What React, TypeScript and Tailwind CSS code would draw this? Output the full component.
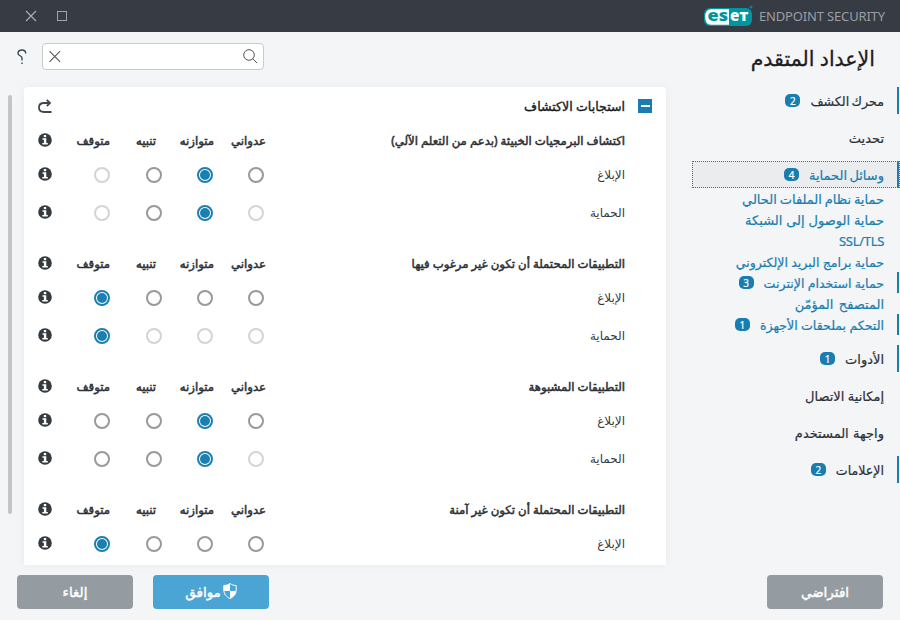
import clsx from 'clsx'

type Level = 'aggressive' | 'balanced' | 'cautious' | 'off'
type Row = { label: string; value: Level; disabled: Level[] }
type Group = { title: string; rows: Row[] }
type NavItem = { label: string; className?: string; badge?: number; active?: boolean; children?: NavItem[] }

const LEVELS: { key: Level; label: string; width: string; offset: string }[] = [
  { key: 'aggressive', label: 'عدواني', width: 'w-[51px]', offset: '-ms-0.5' },
  { key: 'balanced', label: 'متوازنه', width: 'w-[51px]', offset: '-ms-px' },
  { key: 'cautious', label: 'تنبيه', width: 'w-[52px]', offset: 'ms-1.5' },
  { key: 'off', label: 'متوقف', width: 'w-[50px]', offset: '' },
]

const GROUPS: Group[] = [
  {
    title: 'اكتشاف البرمجيات الخبيثة (بدعم من التعلم الآلي)',
    rows: [
      { label: 'الإبلاغ', value: 'balanced', disabled: ['off'] },
      { label: 'الحماية', value: 'balanced', disabled: ['aggressive', 'off'] },
    ],
  },
  {
    title: 'التطبيقات المحتملة أن تكون غير مرغوب فيها',
    rows: [
      { label: 'الإبلاغ', value: 'off', disabled: [] },
      { label: 'الحماية', value: 'off', disabled: ['aggressive', 'balanced', 'cautious'] },
    ],
  },
  {
    title: 'التطبيقات المشبوهة',
    rows: [
      { label: 'الإبلاغ', value: 'balanced', disabled: [] },
      { label: 'الحماية', value: 'balanced', disabled: ['aggressive'] },
    ],
  },
  {
    title: 'التطبيقات المحتملة أن تكون غير آمنة',
    rows: [{ label: 'الإبلاغ', value: 'off', disabled: [] }],
  },
]

const NAV: NavItem[] = [
  { label: 'محرك الكشف', className: 'mt-0.5 text-[12.7px] [word-spacing:-1px]', badge: 2 },
  { label: 'تحديث' },
  {
    label: 'وسائل الحماية',
    className: 'mt-0.5 [word-spacing:-1px]',
    badge: 4,
    active: true,
    children: [
      { label: 'حماية نظام الملفات الحالي', className: 'mt-0.5 [word-spacing:-0.5px]' },
      { label: 'حماية الوصول إلى الشبكة', className: 'mt-0.5 [word-spacing:0.5px]' },
      { label: 'SSL/TLS', className: 'mt-0.5 tracking-[-0.3px]' },
      { label: 'حماية برامج البريد الإلكتروني', className: 'mt-1 text-[12.6px]' },
      { label: 'حماية استخدام الإنترنت', className: 'mt-1 text-[12.6px]', badge: 3 },
      { label: 'المتصفح المؤمّن', className: 'mt-0.5 [word-spacing:2px]' },
      { label: 'التحكم بملحقات الأجهزة', className: 'mt-1 text-[12.6px]', badge: 1 },
    ],
  },
  { label: 'الأدوات', badge: 1 },
  { label: 'إمكانية الاتصال' },
  { label: 'واجهة المستخدم', className: 'mt-0.5 [word-spacing:1px]' },
  { label: 'الإعلامات', className: 'mt-1 text-[12.6px]', badge: 2 },
]

function InfoIcon({ className }: { className?: string }) {
  return (
    <svg className={className} width="14" height="14" viewBox="0 0 14 14">
      <circle cx="7" cy="7" r="6.8" fill="#343a40" />
      <rect x="5.8" y="2" width="2.4" height="2.2" fill="#fff" />
      <path d="M4.500 5.300h3.800v4.700h1.500v1.500H4.300V10h1.600V6.700H4.500z" fill="#fff" />
    </svg>
  )
}

function Radio({ checked, disabled }: { checked: boolean; disabled: boolean }) {
  return (
    <span
      className={clsx(
        'flex size-4 items-center justify-center rounded-full border-2 bg-white',
        checked ? 'border-[#1b7fb1]' : disabled ? 'border-[#d4d4d4]' : 'border-[#999]',
      )}
    >
      {checked && <span className="size-2.5 shrink-0 rounded-full bg-[#1b7fb1]" />}
    </span>
  )
}

function Badge({ count }: { count: number }) {
  return (
    <span className="ms-2.5 flex h-[13px] w-[15px] items-center justify-center rounded-[5px] bg-[#197db0] font-['Noto_Sans'] text-[10px] leading-none text-white">
      {count}
    </span>
  )
}

function NavEntry({ item, sub }: { item: NavItem; sub?: boolean }) {
  return (
    <div
      className={clsx(
        'flex items-center border-s-2 ps-[13px] text-[13px] whitespace-nowrap [-webkit-text-stroke:0.2px]',
        sub ? 'ms-px h-[21px] text-[#197db0]' : 'h-[27px]',
        item.active ? '-my-px text-[#197db0]' : !sub && 'ms-px text-[#2c3036]',
        item.badge ? 'border-[#197db0]' : 'border-transparent',
      )}
    >
      <span className={item.className ?? 'mt-0.5'}>{item.label}</span>
      {item.badge && <Badge count={item.badge} />}
    </div>
  )
}

function GroupBlock({ group }: { group: Group }) {
  return (
    <section className="h-[123px]">
      <div className="flex h-[33px] items-center pt-px text-[11.7px] whitespace-nowrap text-[#2c3036] [-webkit-text-stroke:0.5px]">
        <h3 className="mt-0.5 w-[361px]">{group.title}</h3>
        {LEVELS.map((level) => (
          <span key={level.key} className={clsx('mt-0.5', level.width)}>
            <span className={clsx('inline-block', level.offset)}>{level.label}</span>
          </span>
        ))}
        <InfoIcon className="ms-auto" />
      </div>
      {group.rows.map((row) => (
        <div key={row.label} className="flex h-[38px] items-center text-xs text-[#343a40]">
          <span className="w-[361px]">{row.label}</span>
          {LEVELS.map((level) => (
            <span key={level.key} className={level.width}>
              <Radio checked={row.value === level.key} disabled={row.disabled.includes(level.key)} />
            </span>
          ))}
          <InfoIcon className="ms-auto mb-0.5" />
        </div>
      ))}
    </section>
  )
}

function EsetLogo() {
  return (
    <svg width="49" height="22" viewBox="0 0 49 22">
      <rect x="0" y="3" width="48" height="18" rx="6" fill="#0096a1" />
      <path d="M7 4.200h18v15.600H7q-5.800 0-5.800-7.800T7 4.200z" fill="#fff" />
      <circle cx="47" cy="2" r="1.500" fill="#0f7f88" />
      <text x="3.500" y="16.300" textLength="20.500" lengthAdjust="spacingAndGlyphs" fontFamily="Open Sans" fontWeight="800" fontSize="15" fill="#0096a1">es</text>
      <text x="26" y="16.300" textLength="18.500" lengthAdjust="spacingAndGlyphs" fontFamily="Open Sans" fontWeight="800" fontSize="15" fill="#fff">eт</text>
    </svg>
  )
}

export default function App() {
  return (
    <div dir="rtl" className="flex h-[620px] w-[900px] flex-col overflow-hidden bg-[#f3f5f7] font-['Noto_Sans','DejaVu_Sans',sans-serif]">
      <header className="flex h-8 items-center justify-between bg-[#373b43] ps-[15px] pe-[25px]">
        <div dir="ltr" className="flex items-center gap-1.5">
          <EsetLogo />
          <span className="mt-0.5 font-['Noto_Sans'] text-[13px] tracking-[-0.15px] text-[#9a9ea4]">ENDPOINT SECURITY</span>
        </div>
        <div className="flex items-center gap-5">
          <span className="size-2.5 border border-[#a5a5a5]" />
          <svg width="12" height="12" viewBox="0 0 12 12" stroke="#b0b0b0" strokeWidth="1.1">
            <path d="M1 1l10 10M11 1L1 11" />
          </svg>
        </div>
      </header>

      <div className="flex h-[533px]">
        <aside className="w-[208px] shrink-0">
          <h1 className="flex h-[55px] items-center ps-[25px] pb-0.5 text-[20.5px] whitespace-nowrap text-[#1c1c1e] [-webkit-text-stroke:0.3px]">
            الإعداد المتقدم
          </h1>
          <nav className="flex flex-col gap-2.5">
            {NAV.map((item) => (
              <div key={item.label}>
                {item.active ? (
                  <div className="border border-dotted border-[#197db0] bg-[#ebecee]">
                    <NavEntry item={item} />
                  </div>
                ) : (
                  <NavEntry item={item} />
                )}
                {item.children?.map((child) => (
                  <NavEntry key={child.label} item={child} sub />
                ))}
              </div>
            ))}
          </nav>
        </aside>

        <main className="flex min-w-0 flex-1 flex-col">
          <div className="flex h-[55px] shrink-0 items-center justify-end gap-[15px] pe-[17px] pb-1.5">
            <div className="flex h-[27px] w-[222px] items-center justify-between rounded border border-[#cacaca] bg-white px-[5px]">
              <svg width="16" height="16" viewBox="0 0 16 16" fill="none" stroke="#555" strokeWidth="1">
                <circle cx="7" cy="6" r="5.300" />
                <path d="M10.800 9.800L15 14" />
              </svg>
              <svg width="14" height="12" viewBox="0 0 14 12" stroke="#555" strokeWidth="1.1">
                <path d="M1.500.2l10.600 10.600M12.100.2L1.500 10.800" />
              </svg>
            </div>
            <svg width="10" height="16" viewBox="0 0 10 16" fill="none" stroke="#3d4852" strokeWidth="1.4">
              <path d="M8.700 4.500C8.700 2 7 1 5 1S1 2.200 1 4.200C1 7 5 6.500 5 9v2.500" />
              <path d="M5 13.500v1.600" />
            </svg>
          </div>

          <div className="flex min-h-0 flex-1 ps-[26px]">
            <div className="w-[642px] shrink-0 overflow-hidden rounded-t bg-white px-3.5 shadow-[0_0_8px_rgba(0,0,0,0.05)]">
              <div className="flex h-9 items-center pt-0.5">
                <span className="flex size-3.5 items-center justify-center bg-[#197db0]">
                  <span className="h-0.5 w-[9px] bg-white" />
                </span>
                <h2 className="ms-[13px] mt-0.5 text-[12.6px] text-[#1c1c1e] [-webkit-text-stroke:0.4px]">استجابات الاكتشاف</h2>
                <svg className="ms-auto" width="14" height="15" viewBox="0 0 14 15" fill="none" stroke="#3d4852" strokeWidth="1.8">
                  <path d="M13.500 13H6C2.800 13 1 11 1 8.500S2.800 4 6 4h5.500" />
                  <path d="M8.800.8L12 4 8.800 7.200" />
                </svg>
              </div>
              <div className="ps-[27px]">
                {GROUPS.map((group) => (
                  <GroupBlock key={group.title} group={group} />
                ))}
              </div>
            </div>
            <div className="ms-3 mt-2 h-[419px] w-1 rounded-full bg-[#c3c5c7]" />
          </div>
        </main>
      </div>

      <footer className="flex flex-1 items-start px-[17px] pt-2.5 text-[13.5px] text-white [-webkit-text-stroke:0.4px]">
        <button className="h-[34px] w-[116px] rounded bg-[#949ba1]">افتراضي</button>
        <button className="ms-auto flex h-[34px] w-[116px] items-center justify-center gap-0.5 rounded bg-[#4aa5d4]">
          <svg className="mb-0.5" width="14" height="16" viewBox="0 0 14 16">
            <path d="M7 .5C5 2 3 2.500 .8 2.500V7c0 4 2.700 7 6.200 8.500C10.500 14 13.200 11 13.200 7V2.500C11 2.500 9 2 7 .5z" fill="#4aa5d4" stroke="#fff" />
            <path d="M7 .5C5 2 3 2.500 .8 2.500V8H7zM7 8h6c-.4 3.500-2.800 6.200-6 7.500z" fill="#fff" />
          </svg>
          <span>موافق</span>
        </button>
        <button className="ms-5 h-[34px] w-[116px] rounded bg-[#949ba1]">إلغاء</button>
      </footer>
    </div>
  )
}
